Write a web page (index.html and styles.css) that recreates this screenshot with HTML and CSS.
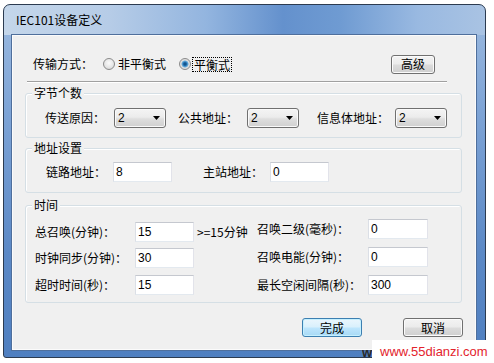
FILE: index.html
```html
<!DOCTYPE html>
<html lang="zh-CN">
<head>
<meta charset="utf-8">
<title>IEC101设备定义</title>
<link rel="stylesheet" href="styles.css">
</head>
<body>
<div class="window">
  <div class="titlebar"><span class="title">IEC101设备定义</span></div>
  <div class="client">
    <div class="mode-row">
      <span class="mode-label">传输方式：</span>
      <span class="radio"><span class="radio-circle"></span><span class="radio-text">非平衡式</span></span>
      <span class="radio radio-second"><span class="radio-circle on"></span><span class="radio-text focus">平衡式</span></span>
      <button class="btn btn-adv">高级</button>
    </div>
    <div class="separator"></div>

    <div class="group">
      <div class="group-title">字节个数</div>
      <div class="group-row row-bytes">
        <span class="lbl lbl-cause">传送原因：</span>
        <span class="combo"><span class="combo-val">2</span><svg class="combo-arrow" width="7" height="4" viewBox="0 0 7 4"><path d="M0 0H7L3.5 4Z"/></svg></span>
        <span class="lbl lbl-common">公共地址：</span>
        <span class="combo"><span class="combo-val">2</span><svg class="combo-arrow" width="7" height="4" viewBox="0 0 7 4"><path d="M0 0H7L3.5 4Z"/></svg></span>
        <span class="lbl lbl-info">信息体地址：</span>
        <span class="combo"><span class="combo-val">2</span><svg class="combo-arrow" width="7" height="4" viewBox="0 0 7 4"><path d="M0 0H7L3.5 4Z"/></svg></span>
      </div>
    </div>

    <div class="group group-addr">
      <div class="group-title">地址设置</div>
      <div class="group-row row-addr">
        <span class="lbl lbl-link">链路地址：</span>
        <span class="input in-59">8</span>
        <span class="lbl lbl-master">主站地址：</span>
        <span class="input in-59">0</span>
      </div>
    </div>

    <div class="group group-time">
      <div class="group-title">时间</div>
      <div class="time-body">
        <div class="time-col time-left">
          <div class="time-row">
            <span class="lbl lbl-tl">总召唤(分钟)：</span>
            <span class="input in-59">15</span>
            <span class="hint">&gt;=15分钟</span>
          </div>
          <div class="time-row row-gap6">
            <span class="lbl lbl-tl">时钟同步(分钟)：</span>
            <span class="input in-59">30</span>
          </div>
          <div class="time-row row-gap7">
            <span class="lbl lbl-tl">超时时间(秒)：</span>
            <span class="input in-59">15</span>
          </div>
        </div>
        <div class="time-col time-right">
          <div class="time-row">
            <span class="lbl lbl-tr">召唤二级(毫秒)：</span>
            <span class="input in-60">0</span>
          </div>
          <div class="time-row row-gap8">
            <span class="lbl lbl-tr">召唤电能(分钟)：</span>
            <span class="input in-60">0</span>
          </div>
          <div class="time-row row-gap8">
            <span class="lbl lbl-tr">最长空闲间隔(秒)：</span>
            <span class="input in-60">300</span>
          </div>
        </div>
      </div>
    </div>

    <div class="actions">
      <button class="btn btn-main btn-default">完成</button>
      <button class="btn btn-main">取消</button>
    </div>
  </div>
</div>
<div class="watermark"><span class="wm-dark">w</span><span class="wm-box">www.55dianzi.com</span></div>
</body>
</html>
```

FILE: styles.css
```css
* { box-sizing: border-box; }
html, body { margin: 0; padding: 0; }
body {
  width: 494px;
  height: 363px;
  background: #fff;
  font-family: "Noto Sans CJK SC", "Liberation Sans", sans-serif;
  font-size: 12px;
  color: #000;
  position: relative;
  overflow: hidden;
}

.window {
  margin: 4px 0 0 3px;
  width: 483px;
  height: 354px;
  border: 1px solid #2c3b50;
  border-radius: 7px 7px 3px 3px;
  padding: 0 9px 7px 8px;
  display: flex;
  flex-direction: column;
  background:
    linear-gradient(90deg, #c4d6ea 0%, #b6cce7 22%, #93b5df 42%, #6491cd 58%, #6f9bd2 70%, #99b9e1 86%, #a9c3e3 100%) top / 100% 30px no-repeat,
    linear-gradient(180deg, #9dbbe0 0%, #7ea4d6 30%, #5c89c6 70%, #4f7fc0 100%);
}

.titlebar {
  height: 30px;
  display: flex;
  align-items: center;
  padding-left: 4px;
  flex: none;
}
.title {
  font-size: 12px;
  line-height: 14px;
  color: #000;
}

.client {
  flex: 1;
  background: #f0f0f0;
  border: 1px solid #fbfbfb;
  box-shadow: 0 0 0 1px #4f6f9c;
  display: flex;
  flex-direction: column;
}

/* row 1 */
.mode-row {
  display: flex;
  align-items: center;
  height: 20px;
  margin: 18px 40px 0 20px;
  line-height: 14px;
}
.mode-label { width: 70px; }
.radio { display: flex; align-items: center; }
.radio-second { margin-left: 13px; }
.radio-circle {
  width: 12px;
  height: 12px;
  border-radius: 50%;
  border: 1px solid #8a8a8a;
  background: radial-gradient(circle at 50% 40%, #fbfbfb 0%, #e6e6e6 55%, #cfcfcf 100%);
  margin-right: 3px;
  flex: none;
}
.radio-circle.on {
  background: radial-gradient(circle at 50% 50%, #0d4577 0px, #1f6aa8 1.6px, #6fb5e3 3.2px, #d9d9d9 3.8px, #f2f2f2 100%);
  margin-right: 1px;
}
.focus {
  border: 1px dotted #000;
  padding: 0 1px;
  line-height: 13px;
}

.btn {
  font-family: "Noto Sans CJK SC", "Liberation Sans", sans-serif;
  font-size: 12px;
  color: #000;
  height: 19px;
  padding: 0;
  line-height: 16px;
  border: 1px solid #707070;
  border-radius: 3px;
  background: linear-gradient(180deg, #f3f3f3 0%, #ebebeb 48%, #dcdcdc 52%, #cfcfcf 100%);
  box-shadow: inset 0 0 0 1px #fbfbfb;
}
.btn-adv { width: 44px; margin-left: auto; }

.separator {
  margin: 7px 28px 0 14px;
  height: 2px;
  border-top: 1px solid #a0a0a0;
  border-bottom: 1px solid #ffffff;
  flex: none;
}

/* group boxes */
.group {
  margin: 10px 13px 0 12px;
  border: 1px solid #d5dfe5;
  border-radius: 3px;
  box-shadow: inset 1px 1px 0 #fff;
  padding-bottom: 9px;
  flex: none;
}
.group-title {
  display: table;
  margin: -8px 0 0 6px;
  padding: 0 2px;
  background: #f0f0f0;
  line-height: 14px;
}
.group-row {
  display: flex;
  align-items: center;
  height: 20px;
  line-height: 14px;
}
.row-bytes { margin-top: 8px; padding-left: 19px; }
.lbl { flex: none; white-space: nowrap; }
.lbl-cause { width: 69px; }
.lbl-common { width: 69px; margin-left: 12px; }
.lbl-info { width: 78px; margin-left: 18px; }

.combo {
  width: 52px;
  height: 20px;
  flex: none;
  display: flex;
  align-items: center;
  justify-content: space-between;
  padding: 0 5px 0 3px;
  border: 1px solid #707070;
  border-radius: 3px;
  background: linear-gradient(180deg, #f4f4f4 0%, #ececec 45%, #dedede 55%, #d0d0d0 100%);
  box-shadow: inset 0 0 0 1px #fafafa;
  font-family: "Liberation Sans", sans-serif;
  font-size: 12px;
}
.combo-arrow { fill: #000; display: block; }

.group-addr { margin-top: 10px; padding-bottom: 10px; }
.row-addr { margin-top: 7px; padding-left: 20px; }
.lbl-link { width: 67px; }
.lbl-master { width: 67px; margin-left: 31px; }

.input {
  height: 20px;
  flex: none;
  display: flex;
  align-items: center;
  padding: 0 2px;
  background: #fff;
  border: 1px solid;
  border-color: #c5c8cf #e2e3ea #e3e9ef #dbdfe6;
  font-family: "Liberation Sans", sans-serif;
  font-size: 12px;
}
.in-59 { width: 59px; }
.in-60 { width: 60px; }

.group-time { margin-top: 12px; padding-bottom: 7px; }
.time-body { display: flex; padding-left: 9px; }
.time-col { display: flex; flex-direction: column; }
.time-left { width: 222px; margin-top: 10px; }
.time-right { margin-top: 7px; }
.time-row { display: flex; align-items: center; height: 20px; line-height: 14px; }
.row-gap6 { margin-top: 6px; }
.row-gap7 { margin-top: 7px; }
.row-gap8 { margin-top: 8px; }
.lbl-tl { width: 100px; }
.lbl-tr { width: 111px; }
.hint { margin-left: 3px; white-space: nowrap; }

.actions {
  display: flex;
  justify-content: flex-end;
  gap: 41px;
  margin: 15px 12px 0 0;
}
.btn-main { width: 60px; }
.btn-default {
  border-color: #3c7fb1;
  background: linear-gradient(180deg, #eaf6fd 0%, #d9f0fc 48%, #bee6fd 52%, #a7d9f5 100%);
  box-shadow: inset 0 0 0 1px #c5f0ff;
}

/* watermark overlay */
.watermark {
  position: absolute;
  left: 362px;
  top: 340px;
  display: flex;
  align-items: stretch;
  height: 23px;
}
.wm-dark {
  width: 10px;
  overflow: hidden;
  font-family: "Liberation Sans", sans-serif;
  font-weight: bold;
  font-size: 13px;
  color: #2a2a2a;
  line-height: 22px;
  padding-top: 2px;
}
.wm-box {
  width: 122px;
  background: #fff;
  color: #e3232c;
  font-family: "Liberation Sans", sans-serif;
  font-size: 13px;
  line-height: 23px;
  padding-left: 8px;
}
```
